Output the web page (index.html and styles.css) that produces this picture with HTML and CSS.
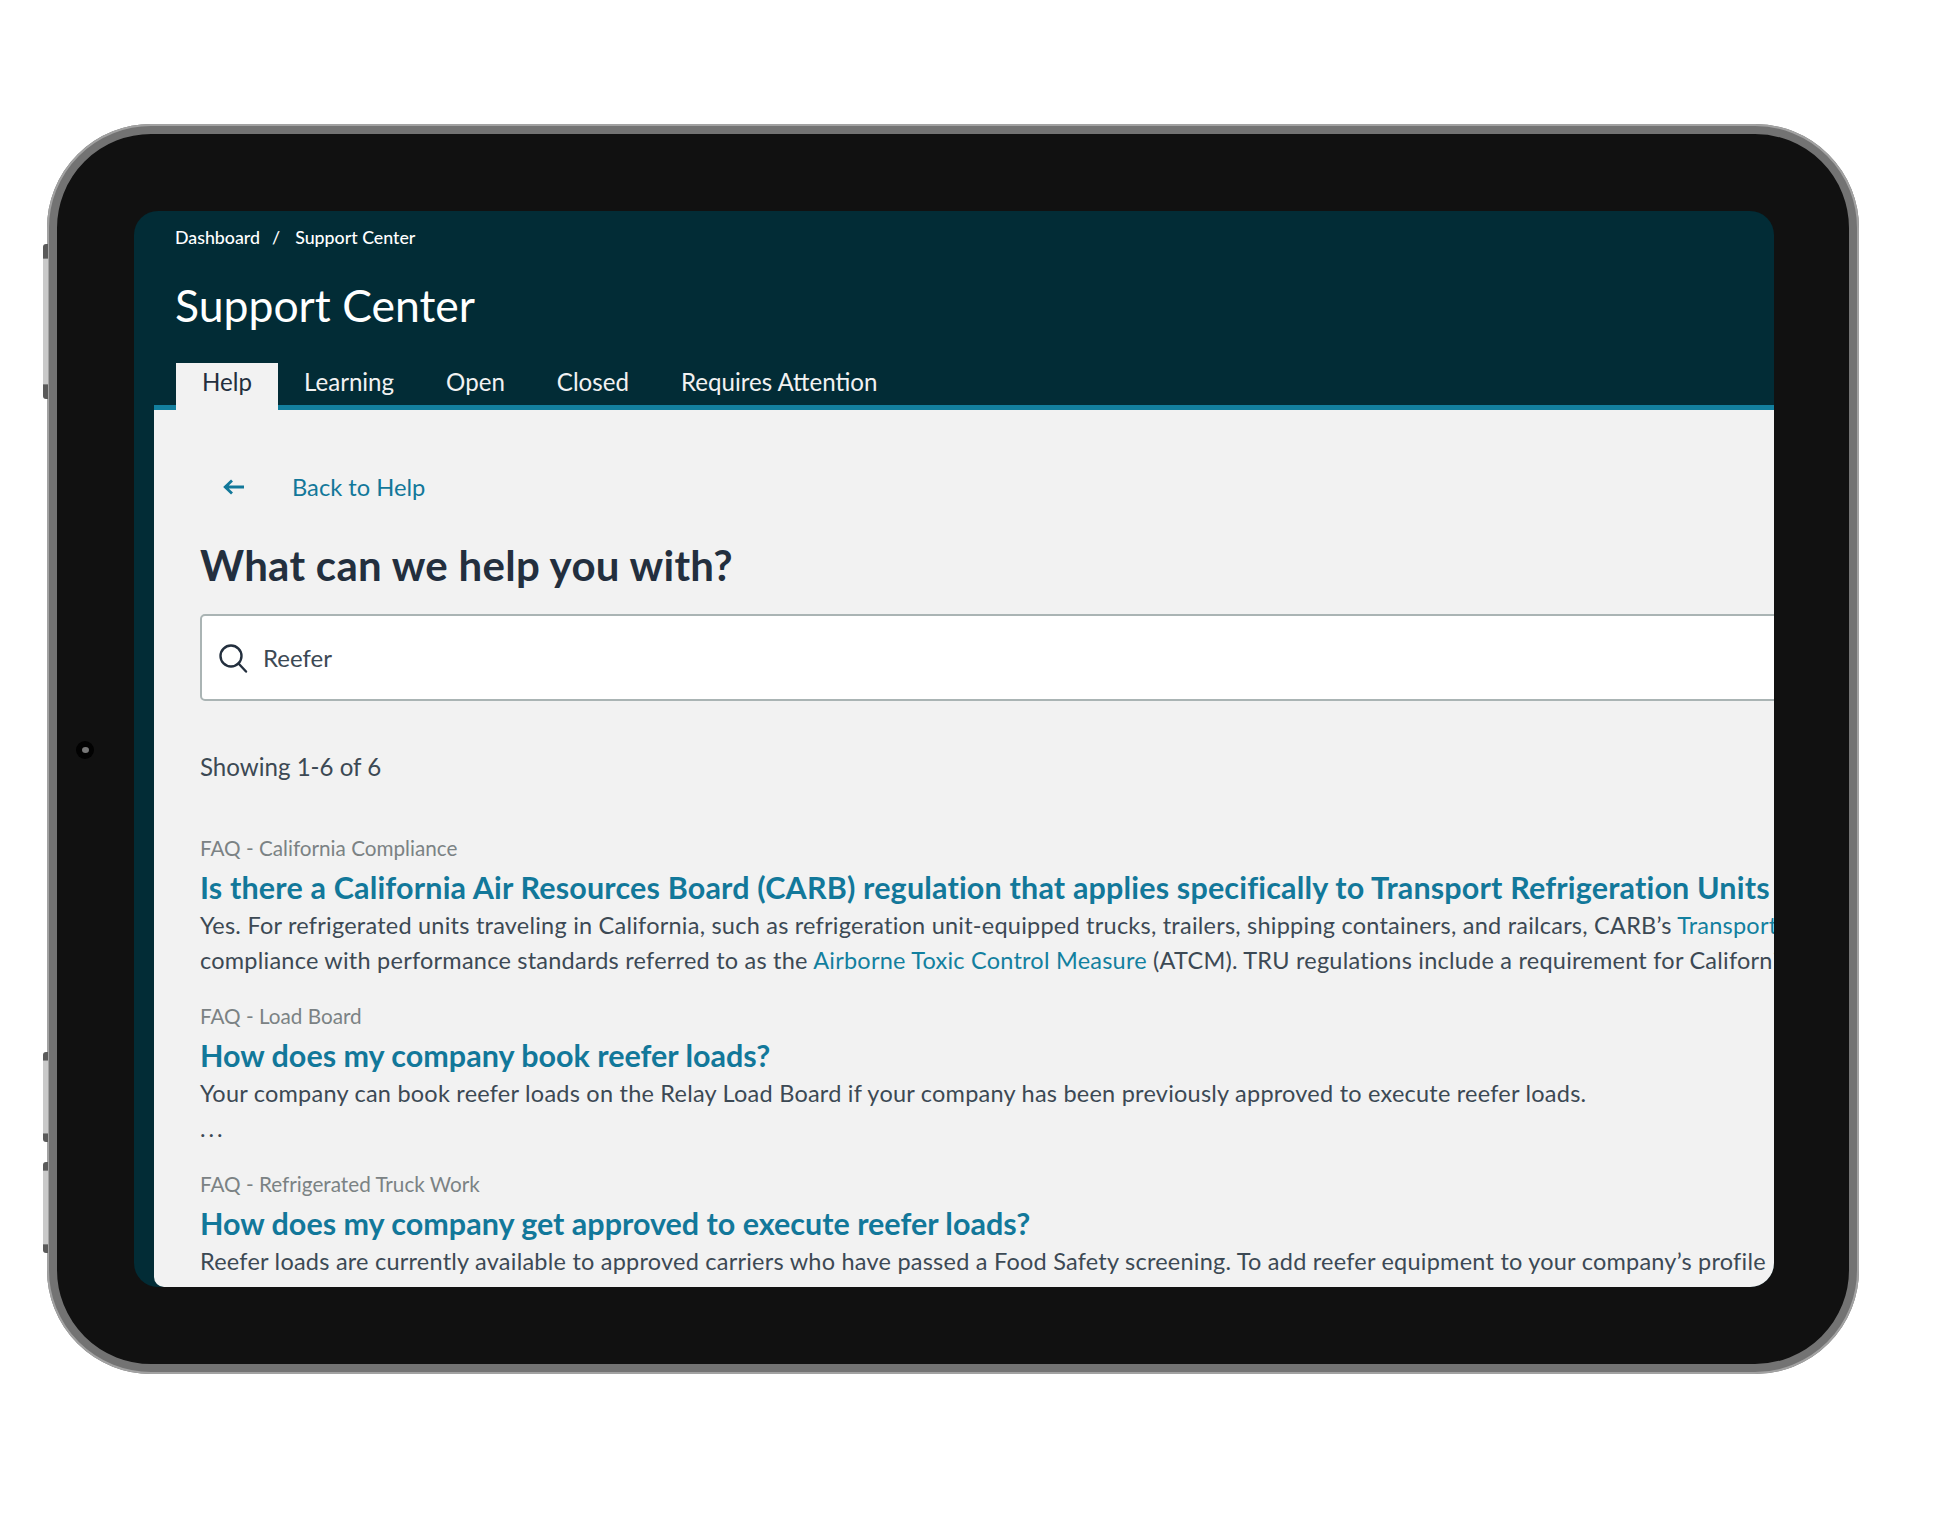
FILE: index.html
```html
<!DOCTYPE html>
<html>
<head>
    <meta charset="UTF-8">
    <title>Support Center</title>
    <link rel="stylesheet" href="styles.css">
</head>
<body>
    <div class="tablet">
        <div class="side-btn side-btn-top"></div>
        <div class="side-btn side-btn-mid"></div>
        <div class="side-btn side-btn-low"></div>
        <div class="camera"><span></span></div>

        <div class="screen">
            <header class="top">
                <div class="crumbs"><span>Dashboard</span><span class="sep">/</span><span>Support Center</span></div>
                <h1>Support Center</h1>
                <nav class="tabs">
                    <a class="tab active">Help</a>
                    <a class="tab">Learning</a>
                    <a class="tab">Open</a>
                    <a class="tab">Closed</a>
                    <a class="tab">Requires Attention</a>
                </nav>
            </header>

            <div class="shell">
                <main class="content">
                    <a class="back">
                        <svg width="22" height="16" viewBox="0 0 22 16" fill="none" stroke="#12789a" stroke-width="2.8">
                            <path d="M21 8H2M9 1.5L2.2 8L9 14.5"/>
                        </svg>
                        <span>Back to Help</span>
                    </a>

                    <h2>What can we help you with?</h2>

                    <div class="search">
                        <svg width="30" height="30" viewBox="0 0 30 30" fill="none" stroke="#232f3e" stroke-width="2.4">
                            <circle cx="13" cy="13" r="10.5"/>
                            <path d="M20.5 20.5L28 28.5" stroke-linecap="round"/>
                        </svg>
                        <span>Reefer</span>
                    </div>

                    <div class="count">Showing 1-6 of 6</div>

                    <section class="result">
                        <div class="label">FAQ - California Compliance</div>
                        <a class="title wide">Is there a California Air Resources Board (CARB) regulation that applies specifically to Transport Refrigeration Units</a>
                        <p>Yes. For refrigerated units traveling in California, such as refrigeration unit-equipped trucks, trailers, shipping containers, and railcars, CARB’s <a>Transport Refrigeration Unit regulation requires</a></p>
                        <p>compliance with performance standards referred to as the <a>Airborne Toxic Control Measure</a> (ATCM). TRU regulations include a requirement for California operators</p>
                    </section>

                    <section class="result">
                        <div class="label">FAQ - Load Board</div>
                        <a class="title">How does my company book reefer loads?</a>
                        <p>Your company can book reefer loads on the Relay Load Board if your company has been previously approved to execute reefer loads.</p>
                        <p class="dots">...</p>
                    </section>

                    <section class="result">
                        <div class="label">FAQ - Refrigerated Truck Work</div>
                        <a class="title">How does my company get approved to execute reefer loads?</a>
                        <p>Reefer loads are currently available to approved carriers who have passed a Food Safety screening. To add reefer equipment to your company’s profile</p>
                        <p>please submit your Food Safety certificate and a list of the refrigerated equipment that will be used on loads</p>
                    </section>
                </main>
            </div>
        </div>
    </div>
</body>
</html>
```

FILE: styles.css
```css
html, body {
    margin: 0;
    padding: 0;
    background: #fff;
}
body {
    font-family: 'Lato', 'Liberation Sans', sans-serif;
    width: 1944px;
    height: 1520px;
    overflow: hidden;
}
.tablet {
    position: relative;
    box-sizing: border-box;
    width: 1812px;
    height: 1250px;
    margin: 124px 0 0 47px;
    padding: 77px 75px 77px 77px;
    background: #111;
    border: 10px solid #737373;
    border-radius: 104px;
}
/* lighter outer edge of the metal frame */
.tablet::before {
    content: '';
    position: absolute;
    top: -10px;
    left: -10px;
    right: -10px;
    bottom: -10px;
    border: 2px solid #a2a2a2;
    border-radius: 104px;
    pointer-events: none;
}
.side-btn {
    position: absolute;
    left: -14px;
    width: 5px;
    background: linear-gradient(180deg, #5a5a5a 0, #5a5a5a 9%, #c9c9c9 10%, #c9c9c9 90%, #5a5a5a 91%, #5a5a5a 100%);
    border-radius: 3px 0 0 3px;
}
.side-btn-top {
    top: 110px;
    height: 155px;
}
.side-btn-mid {
    top: 918px;
    height: 90px;
}
.side-btn-low {
    top: 1028px;
    height: 91px;
}
.camera {
    position: absolute;
    left: 19px;
    top: 607px;
    width: 18px;
    height: 18px;
    border-radius: 50%;
    background: #020202;
    display: flex;
    align-items: center;
    justify-content: center;
}
.camera span {
    width: 7px;
    height: 6px;
    border-radius: 50%;
    background: #777;
}
.screen {
    height: 100%;
    border-radius: 24px;
    overflow: hidden;
    display: flex;
    flex-direction: column;
    background: #022c36;
}
.top {
    padding: 14px 0 0 41px;
    color: #fff;
}
.crumbs {
    font-size: 17.8px;
    line-height: 24px;
    font-weight: 500;
    display: flex;
}
.sep {
    margin: 0 15px 0 12px;
}
h1 {
    margin: 28px 0 0;
    font-size: 44.5px;
    line-height: 56px;
    font-weight: 400;
}
.tabs {
    display: flex;
    margin: 30px 0 0 -21px;
    padding-left: 22px;
    border-bottom: 5px solid #137f9e;
    height: 42px;
}
.tab {
    padding: 0 26px;
    font-size: 24.1px;
    line-height: 38px;
    color: #f2f2f2;
}
.tab.active {
    background: #f2f2f2;
    color: #232f3e;
    height: 47px;
}
.shell {
    flex: 1;
    min-height: 0;
    padding-left: 20px;
}
.content {
    height: 100%;
    box-sizing: border-box;
    padding: 62px 0 0 46px;
    background: #f2f2f2;
    border-bottom-left-radius: 10px;
    overflow: hidden;
    color: #3c4954;
}
.back {
    display: flex;
    align-items: center;
    height: 30px;
    padding-left: 23px;
    font-size: 23.7px;
    color: #12789a;
}
.back span {
    margin-left: 47px;
}
h2 {
    margin: 38px 0 0;
    font-size: 42px;
    line-height: 50px;
    font-weight: 700;
    letter-spacing: 0.3px;
    color: #232f3e;
}
.search {
    display: flex;
    align-items: center;
    gap: 15px;
    box-sizing: border-box;
    height: 87px;
    margin: 24px -20px 0 0;
    padding-left: 16px;
    background: #fff;
    border: 2px solid #aab4b4;
    border-radius: 5px;
    font-size: 24px;
}
.count {
    margin-top: 51px;
    font-size: 24.1px;
    line-height: 30px;
}
.result {
    margin-bottom: 19px;
}
.count + .result {
    margin-top: 46px;
}
.label {
    font-size: 20.7px;
    line-height: 40px;
    color: #7b8284;
}
.title {
    display: block;
    font-size: 30.5px;
    line-height: 39px;
    font-weight: 700;
    color: #12789a;
    white-space: nowrap;
    margin-bottom: 1px;
}
.title.wide {
    letter-spacing: 0.17px;
}
p {
    margin: 0;
    font-size: 23.5px;
    line-height: 34.5px;
    letter-spacing: 0.23px;
    white-space: nowrap;
}
p a {
    color: #12809f;
}
.dots {
    letter-spacing: 3px;
}
```
